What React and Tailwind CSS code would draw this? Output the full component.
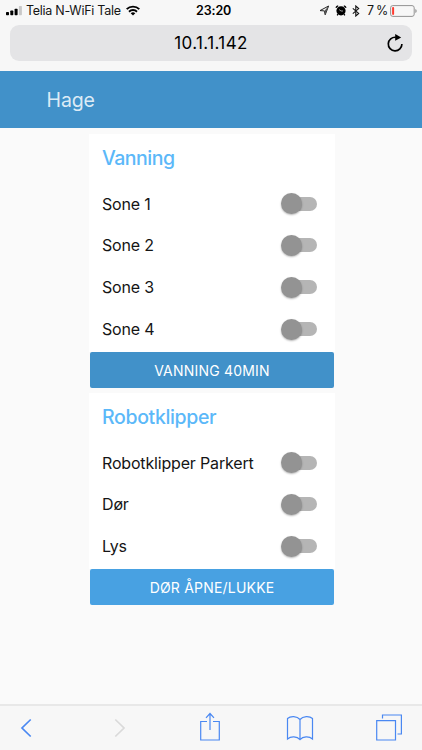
import React from "react";

const groups = [
  {
    title: "Vanning",
    titleClass: "tracking-[-0.5px]",
    rows: ["Sone 1", "Sone 2", "Sone 3", "Sone 4"],
    button: "VANNING 40MIN",
    buttonClass: "bg-[#4191c9] tracking-[0.2px]",
  },
  {
    title: "Robotklipper",
    titleClass: "tracking-[-0.35px]",
    rows: ["Robotklipper Parkert", "Dør", "Lys"],
    button: "DØR ÅPNE/LUKKE",
    buttonClass: "bg-[#48a1e2] tracking-[0.2px]",
  },
];

const StatusBar = () => (
  <div className="relative flex h-[21px] items-center text-[12.5px] leading-none text-[#151515]">
    <svg className="ml-[6px] h-[10px] w-[17px]" viewBox="0 0 17 10">
      <rect x="0" y="6" width="3" height="3.2" rx="0.7" fill="#000" />
      <rect x="4.3" y="4.5" width="3" height="4.7" rx="0.7" fill="#000" />
      <rect x="8.6" y="2.7" width="3" height="6.5" rx="0.7" fill="#000" />
      <rect x="12.9" y="0" width="3" height="9.2" rx="0.7" fill="#c8c8c8" />
    </svg>
    <span className="ml-[3px] w-[95px] whitespace-nowrap pt-[1px] tracking-[-0.27px]">Telia N-WiFi Tale</span>
    <svg className="ml-[5px] h-[11px] w-[14px]" viewBox="0 0 14 11" fill="none" stroke="#000" strokeWidth="1.9">
      <path d="M0.7 4.2A8.9 8.9 0 0 1 13.3 4.2" />
      <path d="M3 6.7A5.7 5.7 0 0 1 11 6.7" />
      <path d="M7 10.6L4.7 8.3A3.3 3.3 0 0 1 9.3 8.3Z" fill="#000" stroke="none" />
    </svg>
    <span className="absolute left-[196px] top-[5px] font-semibold tracking-[-0.1px] text-black">23:20</span>
    <div className="ml-auto flex items-center">
      <svg className="h-[11px] w-[11px]" viewBox="0 0 11 11" fill="none" stroke="#222" strokeWidth="1" strokeLinejoin="round">
        <path d="M1 5.6L9.6 1L6.2 9.8L5.3 5.9Z" />
        <path d="M9.6 1L5.3 5.9L6.2 9.8Z" fill="#555" stroke="none" />
      </svg>
      <svg className="ml-[5px] h-[11px] w-[12px]" viewBox="0 0 12 11" fill="none">
        <circle cx="6" cy="5.8" r="4.6" fill="#000" />
        <path d="M1 2.8A3 3 0 0 1 3.2 0.9M11 2.8A3 3 0 0 0 8.8 0.9M3 9.2L2.2 10.3M9 9.2L9.8 10.3" stroke="#000" strokeWidth="1.4" />
        <path d="M4.2 4.6L6 6H8" stroke="#ddd" strokeWidth="0.7" />
      </svg>
      <svg className="ml-[5px] h-[12px] w-[8px]" viewBox="0 0 8 12" fill="none" stroke="#111" strokeWidth="1.1">
        <path d="M0.8 3.3L6.7 8.4L3.8 11V1L6.7 3.6L0.8 8.7" />
      </svg>
      <span className="ml-[7px] w-[20px] whitespace-nowrap pt-[1px] tracking-[-0.1px]">
        7<span className="ml-[2px]">%</span>
      </span>
      <svg className="ml-[3px] mr-[5px] h-[12px] w-[27px]" viewBox="0 0 27 12" fill="none">
        <rect x="0.6" y="0.6" width="23.6" height="10.8" rx="2.2" stroke="#929292" strokeWidth="1" />
        <path d="M25.3 4V8Q26.7 7.5 26.7 6T25.3 4Z" fill="#929292" />
        <rect x="2.1" y="2.1" width="2" height="7.8" rx="0.8" fill="#ff3b30" />
      </svg>
    </div>
  </div>
);

const AddressBar = () => (
  <div className="relative mx-[10px] mt-[4px] flex h-[36px] items-center justify-center rounded-[9px] bg-[#e4e4e6]">
    <span className="text-[17px] leading-none tracking-[0.4px] text-black">10.1.1.142</span>
    <svg className="absolute right-[8px] top-[9px] h-[18px] w-[18px]" viewBox="0 0 18 18" fill="none">
      <path d="M9.8 3.3A6.8 6.8 0 1 0 15.9 10" stroke="#000" strokeWidth="1.7" />
      <path d="M9.2 0L15.2 3.4L9.2 6.8Z" fill="#000" />
    </svg>
  </div>
);

const Switch = () => (
  <span className="flex h-[14px] w-[36px] items-center rounded-full bg-linear-to-r from-transparent from-10% to-[#b5b5b5] to-10%">
    <span className="h-[21px] w-[21px] rounded-full bg-[#939393] shadow-[0_1px_2px_rgba(0,0,0,0.3)]" />
  </span>
);

const Group = ({ title, titleClass, rows, button, buttonClass }) => (
  <section className="w-[246px] pb-[5px]">
    <div className="bg-white pb-[2.3px]">
      <h2 className={`flex h-[49px] items-center pl-[13px] pt-[1px] text-[19.5px] font-medium leading-none text-[#5bb8f9] ${titleClass}`}>
        {title}
      </h2>
      {rows.map((label) => (
        <div key={label} className="flex h-[41.8px] items-center justify-between pl-[13px] pr-[18px]">
          <span className="whitespace-nowrap text-[16px] leading-none tracking-[-0.17px] text-[#151515]">{label}</span>
          <Switch />
        </div>
      ))}
    </div>
    <button
      className={`mx-auto flex h-[35.5px] w-[244.5px] items-center justify-center rounded-[2px] pt-[2px] text-[14px] leading-none text-white ${buttonClass}`}
    >
      {button}
    </button>
  </section>
);

const Toolbar = () => (
  <nav className="h-[46px] border-t-2 border-[#e8e8e8] bg-[#f7f7f7]">
    <svg className="h-[44px] w-[422px]" viewBox="0 0 422 44" fill="none" stroke="#4a88f2" strokeWidth="1.2">
      <path d="M30.7 13.5L22 22L30.7 30.5" strokeWidth="1.7" />
      <path d="M115.3 13.5L124 22L115.3 30.5" stroke="#dadada" strokeWidth="1.7" />
      <path d="M207 15.5H200.7V34H219.3V15.5H213M210 24V7.5M206 11.8L210 7.5L214 11.8" />
      <path d="M300 13.5C297 9.8 290.5 9.8 287.5 12.5V33C291 30 297 30.3 300 33.7C303 30.3 309 30 312.5 33V12.5C309.5 9.8 303 9.8 300 13.5V33.7" />
      <path d="M376.7 14.7H395.5V34H376.7ZM382.5 12.5V9H401.4V28H397.5" />
    </svg>
  </nav>
);

const App = () => (
  <div className="flex h-[750px] w-[422px] flex-col overflow-hidden bg-[#fafafa] font-['Inter',sans-serif]">
    <div className="h-[71px] shrink-0 bg-[#f7f7f7]">
      <StatusBar />
      <AddressBar />
    </div>
    <header className="flex h-[57px] shrink-0 items-center bg-[#4191c9] pl-[46.5px] pt-[3px]">
      <h1 className="text-[19.5px] leading-none tracking-[-0.1px] text-[#dcebf6]">Hage</h1>
    </header>
    <main className="flex flex-1 flex-col items-start pl-[89px] pt-[5.8px]">
      {groups.map((g) => (
        <Group key={g.title} {...g} />
      ))}
    </main>
    <Toolbar />
  </div>
);

export default App;
